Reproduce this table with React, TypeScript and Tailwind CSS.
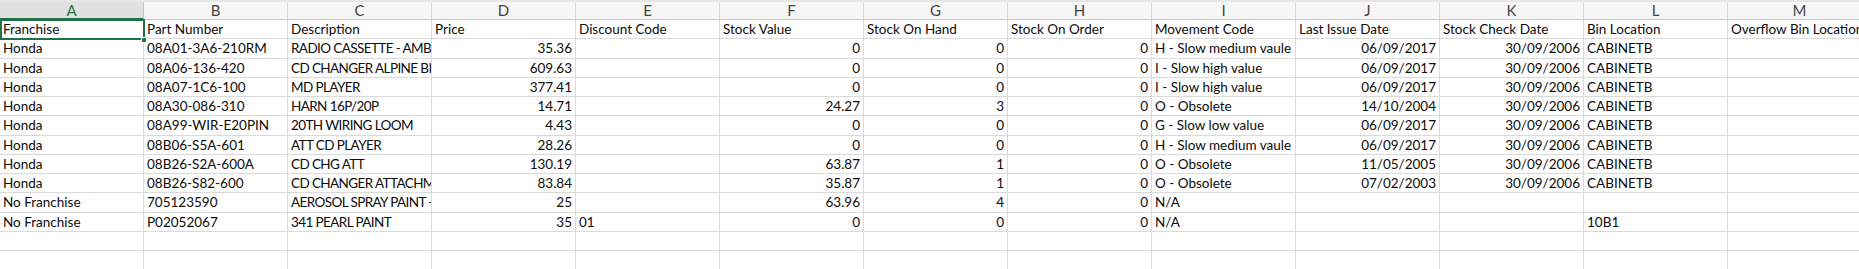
const columns = ['A', 'B', 'C', 'D', 'E', 'F', 'G', 'H', 'I', 'J', 'K', 'L', 'M']

// r = right aligned (numbers, dates)
type Cell = string | { v: string; r: true }
const n = (v: string): Cell => ({ v, r: true })

const rows: Cell[][] = [
  ['Franchise', 'Part Number', 'Description', 'Price', 'Discount Code', 'Stock Value', 'Stock On Hand', 'Stock On Order', 'Movement Code', 'Last Issue Date', 'Stock Check Date', 'Bin Location', 'Overflow Bin Location'],
  ['Honda', '08A01-3A6-210RM', 'RADIO CASSETTE - AMBI', n('35.36'), '', n('0'), n('0'), n('0'), 'H - Slow medium vaule', n('06/09/2017'), n('30/09/2006'), 'CABINETB', ''],
  ['Honda', '08A06-136-420', 'CD CHANGER ALPINE BI', n('609.63'), '', n('0'), n('0'), n('0'), 'I - Slow high value', n('06/09/2017'), n('30/09/2006'), 'CABINETB', ''],
  ['Honda', '08A07-1C6-100', 'MD PLAYER', n('377.41'), '', n('0'), n('0'), n('0'), 'I - Slow high value', n('06/09/2017'), n('30/09/2006'), 'CABINETB', ''],
  ['Honda', '08A30-086-310', 'HARN 16P/20P', n('14.71'), '', n('24.27'), n('3'), n('0'), 'O - Obsolete', n('14/10/2004'), n('30/09/2006'), 'CABINETB', ''],
  ['Honda', '08A99-WIR-E20PIN', '20TH WIRING LOOM', n('4.43'), '', n('0'), n('0'), n('0'), 'G - Slow low value', n('06/09/2017'), n('30/09/2006'), 'CABINETB', ''],
  ['Honda', '08B06-S5A-601', 'ATT CD PLAYER', n('28.26'), '', n('0'), n('0'), n('0'), 'H - Slow medium vaule', n('06/09/2017'), n('30/09/2006'), 'CABINETB', ''],
  ['Honda', '08B26-S2A-600A', 'CD CHG ATT', n('130.19'), '', n('63.87'), n('1'), n('0'), 'O - Obsolete', n('11/05/2005'), n('30/09/2006'), 'CABINETB', ''],
  ['Honda', '08B26-S82-600', 'CD CHANGER ATTACHM', n('83.84'), '', n('35.87'), n('1'), n('0'), 'O - Obsolete', n('07/02/2003'), n('30/09/2006'), 'CABINETB', ''],
  ['No Franchise', '705123590', 'AEROSOL SPRAY PAINT -', n('25'), '', n('63.96'), n('4'), n('0'), 'N/A', '', '', '', ''],
  ['No Franchise', 'P02052067', '341 PEARL PAINT', n('35'), '01', n('0'), n('0'), n('0'), 'N/A', '', '', '10B1', ''],
  ['', '', '', '', '', '', '', '', '', '', '', '', ''],
  ['', '', '', '', '', '', '', '', '', '', '', '', ''],
]

// rows are 19.2px on average in the shot, so mix 19 and 20
const tall = [false, true, false, false, false, true, false, false, false, true, false, false, true]

const base = 'w-[144px] shrink-0 overflow-hidden whitespace-nowrap border-r border-b border-[#dadada] text-[13.5px] leading-[19px]'

export default function App() {
  return (
    <div
      className="relative w-[1859px] h-[269px] overflow-hidden bg-white text-[#0c0c0c]"
      style={{ fontFamily: 'Lato, "Liberation Sans", sans-serif' }}
    >
      <div className="h-[2px] w-[1872px] bg-[#e6e6e6]" />
      <div className="flex w-[1872px]">
        {columns.map((c, i) => (
          <div
            key={c}
            className={
              i === 0
                ? 'w-[144px] h-[18px] shrink-0 flex items-center justify-center bg-[#e1e1e1] border-r border-[#c6c6c6] border-b-2 border-b-[#217346] text-[#217346] text-[15px] leading-none'
                : 'w-[144px] h-[18px] shrink-0 flex items-center justify-center bg-[#f6f6f6] border-r border-[#dadada] border-b border-b-[#c6c6c6] text-[#444] text-[15px] leading-none'
            }
          >
            {c}
          </div>
        ))}
      </div>
      {rows.map((row, ri) => (
        <div key={ri} className={tall[ri] ? 'flex w-[1872px] h-[20px]' : 'flex w-[1872px] h-[19px]'}>
          {row.map((cell, ci) => {
            const right = typeof cell !== 'string'
            const text = typeof cell === 'string' ? cell : cell.v
            // Calibri caps are narrow, squeeze the description column a bit
            const squeeze = ci === 2 && ri > 0
            return (
              <div
                key={ci}
                className={
                  right
                    ? `${base} text-right pr-[3px]`
                    : squeeze
                      ? `${base} pl-[3px] tracking-[-0.6px]`
                      : `${base} pl-[3px]`
                }
              >
                {text}
              </div>
            )
          })}
        </div>
      ))}
      {/* active cell A1 */}
      <div className="absolute left-0 top-[19px] w-[145px] h-[21px] border-2 border-[#217346]" />
      <div className="absolute left-[141px] top-[37px] w-[6px] h-[6px] bg-[#217346] border border-white" />
    </div>
  )
}
